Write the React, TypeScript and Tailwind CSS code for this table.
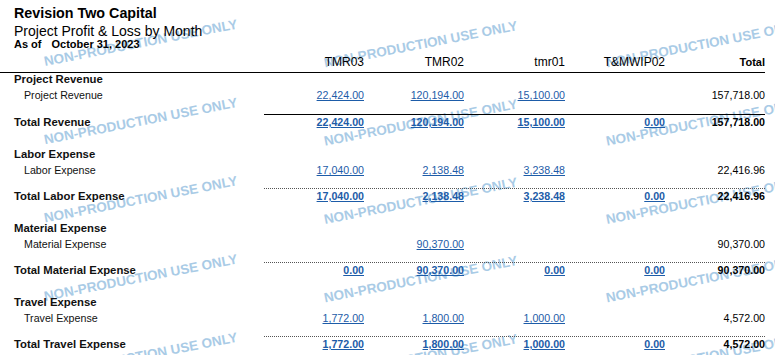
import React from "react";

type Section = {
    name: string;
    totalLabel: string;
    detail: string[];
    total: string[];
    line: "solid" | "dotted";
};

const sections: Section[] = [
    {
        name: "Project Revenue",
        totalLabel: "Total Revenue",
        detail: ["22,424.00", "120,194.00", "15,100.00", "", "157,718.00"],
        total: ["22,424.00", "120,194.00", "15,100.00", "0.00", "157,718.00"],
        line: "solid",
    },
    {
        name: "Labor Expense",
        totalLabel: "Total Labor Expense",
        detail: ["17,040.00", "2,138.48", "3,238.48", "", "22,416.96"],
        total: ["17,040.00", "2,138.48", "3,238.48", "0.00", "22,416.96"],
        line: "dotted",
    },
    {
        name: "Material Expense",
        totalLabel: "Total Material Expense",
        detail: ["", "90,370.00", "", "", "90,370.00"],
        total: ["0.00", "90,370.00", "0.00", "0.00", "90,370.00"],
        line: "dotted",
    },
    {
        name: "Travel Expense",
        totalLabel: "Total Travel Expense",
        detail: ["1,772.00", "1,800.00", "1,000.00", "", "4,572.00"],
        total: ["1,772.00", "1,800.00", "1,000.00", "0.00", "4,572.00"],
        line: "dotted",
    },
];

const columns = ["TMR03", "TMR02", "tmr01", "T&MWIP02"];

// watermark anchors (left end of the baseline)
const marks: { x: number; y: number }[] = [];
for (let r = 0; r < 5; r++) {
    [45, 325, 607].forEach((x, c) => {
        marks.push({ x, y: (c === 0 ? 66 : 67.5) + 78.3 * r });
    });
}

const Values = ({ values, bold }: { values: string[]; bold?: boolean }) => (
    <div className="grid grid-cols-[100px_100px_101px_100px_100px] text-[10.67px]">
        {values.map((v, i) => (
            <div key={i} className={`text-right ${bold ? "font-bold" : ""}`}>
                {v !== "" &&
                    (i < 4 ? (
                        <a href="#" className="text-[#1d5ca8] underline underline-offset-[1px]">
                            {v}
                        </a>
                    ) : (
                        <span className="text-black">{v}</span>
                    ))}
            </div>
        ))}
    </div>
);

const SectionBlock = ({ s, first }: { s: Section; first: boolean }) => (
    <div>
        {/* section heading */}
        <div className={`pl-[14px] text-[11.33px] font-bold ${first ? "leading-[12px]" : "leading-[16px]"}`}>
            {s.name}
        </div>

        {/* detail row */}
        <div className={`grid grid-cols-[264px_501px] leading-[16px] ${first ? "mt-[2px]" : ""}`}>
            <div className="pl-[24px] text-[10.67px]">{s.name}</div>
            <Values values={s.detail} />
        </div>

        <div className={first ? "h-[11px]" : "h-[10px]"} />

        {/* total row */}
        <div className="grid h-[32px] grid-cols-[264px_501px] leading-[14px]">
            <div className="pl-[14px] pt-[1px] text-[11.33px] font-bold">{s.totalLabel}</div>
            <div
                className={`border-t ${
                    s.line === "solid" ? "border-solid border-black" : "border-dotted border-[#555]"
                }`}
            >
                <Values values={s.total} bold />
            </div>
        </div>
    </div>
);

export default function App() {
    return (
        <div className="relative h-[355px] w-[775px] overflow-hidden bg-white font-['Liberation_Sans',Arial,sans-serif] text-[#111]">
            {/* watermark */}
            <svg className="pointer-events-none absolute inset-0" width="775" height="355">
                {marks.map((m, i) => (
                    <text
                        key={i}
                        x={m.x}
                        y={m.y}
                        transform={`rotate(-11 ${m.x} ${m.y})`}
                        fill="#a9cbe6"
                        fontSize="13.5"
                        fontWeight="bold"
                        fontFamily="'Liberation Sans', Arial, sans-serif"
                    >
                        NON-PRODUCTION USE ONLY
                    </text>
                ))}
            </svg>

            <div className="relative w-[765px]">
                {/* report title */}
                <div className="pl-[14px] pt-[4px]">
                    <div className="text-[14.3px] font-bold leading-[19px] text-black">Revision Two Capital</div>
                    <div className="text-[14px] leading-[17px] text-black">Project Profit &amp; Loss by Month</div>
                    <div className="text-[11px] font-bold leading-[9px] text-black">
                        <span className="mr-[10px]">As of</span>
                        <span>October 31, 2023</span>
                    </div>
                </div>

                {/* column header */}
                <div className="grid grid-cols-[264px_100px_100px_101px_100px_100px] border-b border-black pt-[3px] text-[12px] leading-[20px] text-black">
                    <div />
                    {columns.map((c) => (
                        <div key={c} className="text-right">
                            {c}
                        </div>
                    ))}
                    <div className="text-right text-[11px] font-bold">Total</div>
                </div>

                {sections.map((s, i) => (
                    <SectionBlock key={s.name} s={s} first={i === 0} />
                ))}
            </div>
        </div>
    );
}
